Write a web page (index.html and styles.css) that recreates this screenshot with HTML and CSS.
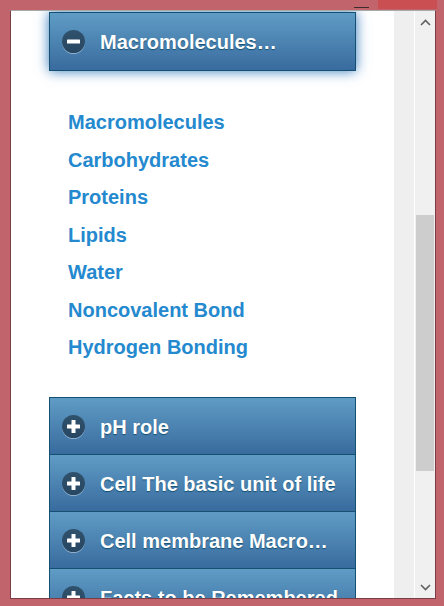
FILE: index.html
```html
<!DOCTYPE html>
<html>
<head>
<meta charset="utf-8">
<link rel="stylesheet" href="styles.css">
</head>
<body>
<div class="titlebar">
  <span class="min-mark"></span>
  <span class="close-area"></span>
</div>
<div class="window">
  <div class="main">
    <div class="collapsible-set">
      <div class="coll-heading expanded">
        <span class="icon"><svg width="23" height="23" viewBox="0 0 23 23"><rect x="5" y="9.5" width="13" height="4" rx="0.5" fill="#fff"/></svg></span>
        <span class="coll-title">Macromolecules…</span>
      </div>
      <div class="coll-content">
        <a class="link" href="#">Macromolecules</a>
        <a class="link" href="#">Carbohydrates</a>
        <a class="link" href="#">Proteins</a>
        <a class="link" href="#">Lipids</a>
        <a class="link" href="#">Water</a>
        <a class="link" href="#">Noncovalent Bond</a>
        <a class="link" href="#">Hydrogen Bonding</a>
      </div>
      <div class="coll-heading first">
        <span class="icon"><svg width="23" height="23" viewBox="0 0 23 23"><rect x="5" y="9.5" width="13" height="4" rx="0.5" fill="#fff"/><rect x="9.5" y="5" width="4" height="13" rx="0.5" fill="#fff"/></svg></span>
        <span class="coll-title">pH role</span>
      </div>
      <div class="coll-heading">
        <span class="icon"><svg width="23" height="23" viewBox="0 0 23 23"><rect x="5" y="9.5" width="13" height="4" rx="0.5" fill="#fff"/><rect x="9.5" y="5" width="4" height="13" rx="0.5" fill="#fff"/></svg></span>
        <span class="coll-title">Cell The basic unit of life</span>
      </div>
      <div class="coll-heading">
        <span class="icon"><svg width="23" height="23" viewBox="0 0 23 23"><rect x="5" y="9.5" width="13" height="4" rx="0.5" fill="#fff"/><rect x="9.5" y="5" width="4" height="13" rx="0.5" fill="#fff"/></svg></span>
        <span class="coll-title">Cell membrane Macromolecules</span>
      </div>
      <div class="coll-heading">
        <span class="icon"><svg width="23" height="23" viewBox="0 0 23 23"><rect x="5" y="9.5" width="13" height="4" rx="0.5" fill="#fff"/><rect x="9.5" y="5" width="4" height="13" rx="0.5" fill="#fff"/></svg></span>
        <span class="coll-title">Facts to be Remembered</span>
      </div>
    </div>
  </div>
  <div class="side-col"></div>
  <div class="scrollbar">
    <div class="arrow">
      <svg width="11" height="7" viewBox="0 0 11 7"><path d="M1 6 L5.5 1.5 L10 6" fill="none" stroke="#606060" stroke-width="1.6"/></svg>
    </div>
    <div class="track-top"></div>
    <div class="thumb"></div>
    <div class="track-bottom"></div>
    <div class="arrow">
      <svg width="11" height="7" viewBox="0 0 11 7"><path d="M1 1 L5.5 5.5 L10 1" fill="none" stroke="#606060" stroke-width="1.6"/></svg>
    </div>
  </div>
</div>
</body>
</html>
```

FILE: styles.css
```css
html, body {
  margin: 0;
  padding: 0;
}
body {
  width: 444px;
  height: 606px;
  background: #c1646b;
  overflow: hidden;
  font-family: "Liberation Sans", Arial, sans-serif;
}
.titlebar {
  height: 10px;
  display: flex;
  align-items: flex-start;
}
.min-mark {
  width: 15px;
  height: 1px;
  background: #3b2c2e;
  margin-left: 354px;
  margin-top: 7px;
}
.close-area {
  width: 59px;
  height: 9px;
  margin-left: 9px;
  background: #c94f52;
}
.window {
  margin-left: 10px;
  width: 424px;
  height: 587px;
  border-left: 1px solid #7a3c45;
  border-right: 1px solid #7a3c45;
  border-bottom: 1px solid #7a3c45;
  border-top: 1px solid #a9a9a9;
  display: flex;
  background: #fff;
}
.main {
  width: 383px;
  height: 587px;
  overflow: hidden;
  background: #fff;
}
.side-col {
  width: 20px;
  background: #efefef;
  border-right: 1px solid #ffffff;
}
.scrollbar {
  width: 20px;
  background: #f0f0f0;
  display: flex;
  flex-direction: column;
  align-items: center;
}
.arrow {
  height: 22px;
  display: flex;
  align-items: center;
  justify-content: center;
  width: 100%;
}
.track-top {
  height: 182px;
}
.thumb {
  width: 18px;
  height: 256px;
  background: #cdcdcd;
}
.track-bottom {
  flex: 1;
}
.collapsible-set {
  margin-left: 38px;
  margin-top: 1px;
  width: 307px;
}
.coll-heading {
  position: relative;
  border: 1px solid #145072;
  background: #2567ab;
  background-image: linear-gradient(#5f9cc5, #396b9e);
  color: #fff;
  font-weight: bold;
  font-size: 20px;
  line-height: 22px;
  padding: 18px 15px 16px 50px;
  text-shadow: 0 1px 1px #145072;
  white-space: nowrap;
}
.coll-heading + .coll-heading {
  border-top: 0;
}
.coll-heading.expanded {
  padding-bottom: 17px;
  box-shadow: 0 0 12px #387bbe;
  z-index: 1;
}
.coll-heading.first {
  border-top: 1px solid #145072;
}
.coll-title {
  display: block;
  overflow: hidden;
  text-overflow: ellipsis;
}
.icon {
  position: absolute;
  left: 12px;
  top: 17px;
  width: 23px;
  height: 23px;
  border-radius: 50%;
  background: rgba(0, 0, 0, 0.42);
  box-shadow: 0 1px 0 rgba(255, 255, 255, 0.4);
  display: block;
}
.icon svg {
  display: block;
}
.coll-content {
  display: flex;
  flex-direction: column;
  align-items: flex-start;
  padding: 33px 0 30px 19px;
}
.link {
  color: #2489ce;
  font-weight: bold;
  font-size: 20px;
  line-height: 37.5px;
  text-decoration: none;
}
```
